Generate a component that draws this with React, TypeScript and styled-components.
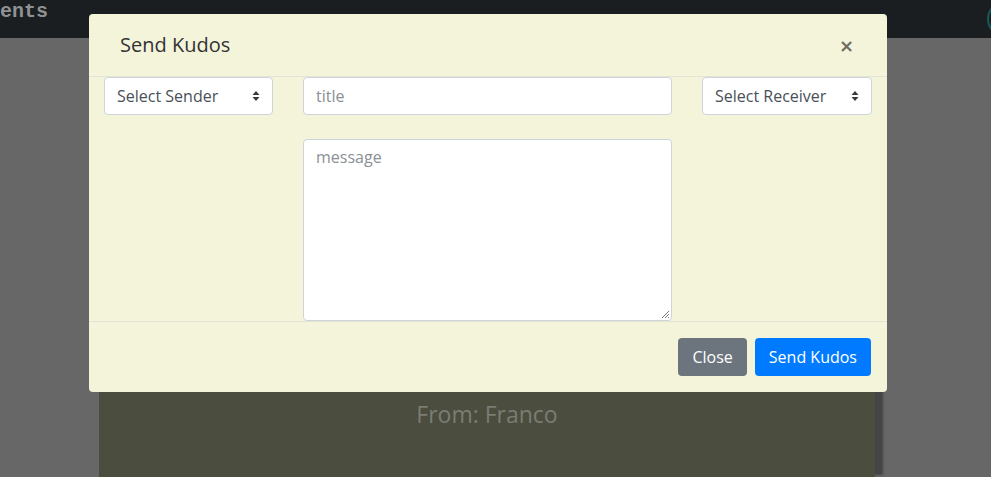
import React from "react";
import styled, { createGlobalStyle } from "styled-components";

const Global = createGlobalStyle`
  html, body { margin: 0; padding: 0; }
  body {
    background: #676767;
    font-family: "Open Sans", "Lato", sans-serif;
    overflow: hidden;
    height: 477px;
  }
  * { box-sizing: border-box; }
`;

const Page = styled.div`
  position: relative;
  width: 991px;
  height: 477px;
  overflow: hidden;
`;

const NavBar = styled.div`
  height: 38px;
  background: #1b1e21;
  display: flex;
  align-items: flex-start;
  justify-content: space-between;
  overflow: hidden;
`;

const Brand = styled.span`
  font-family: "Liberation Mono", monospace;
  font-weight: bold;
  font-size: 20px;
  color: #8f9293;
  line-height: 24px;
  margin-left: 0;
`;

const Avatar = styled.span`
  width: 36px;
  height: 36px;
  border-radius: 50%;
  border: 2px solid #15595f;
  margin-top: 1px;
  margin-right: -32px;
`;

const Main = styled.div`
  display: flex;
  padding-left: 99px;
  height: 439px;
`;

const Card = styled.div`
  width: 776px;
  height: 100%;
  background: #4b4d3f;
  box-shadow: 10px 0 2px -2px #454545;
  display: flex;
  flex-direction: column;
  align-items: center;
  padding-top: 361px;
`;

const From = styled.div`
  font-size: 23px;
  color: #7b7c72;
  line-height: 30px;
`;

const Overlay = styled.div`
  position: absolute;
  inset: 0;
  display: flex;
  justify-content: flex-start;
  align-items: flex-start;
  padding: 14px 0 0 89px;
`;

const Modal = styled.div`
  width: 798px;
  background: #f4f4da;
  border-radius: 4px;
`;

const Header = styled.div`
  height: 63px;
  display: flex;
  align-items: flex-start;
  justify-content: space-between;
  padding: 17px 33px 0 31px;
  border-bottom: 1px solid #e3e4d4;
`;

const Title = styled.h5`
  margin: 0;
  font-size: 20px;
  font-weight: 400;
  color: #333;
  line-height: 28px;
`;

const CloseX = styled.button`
  border: none;
  background: none;
  padding: 0;
  margin-top: 5px;
  font-size: 18px;
  font-weight: 700;
  line-height: 20px;
  color: #6d6d64;
  font-family: "DejaVu Sans", sans-serif;
`;

const Body = styled.div`
  display: flex;
  justify-content: space-between;
  align-items: flex-start;
  padding: 0 15px;
`;

const SelectBox = styled.div<{ $w: number }>`
  width: ${(p) => p.$w}px;
  height: 38px;
  background: #fff;
  border: 1px solid #ced4da;
  border-radius: 4px;
  display: flex;
  align-items: center;
  justify-content: space-between;
  padding: 0 12px 0 12px;
  font-size: 16px;
  color: #495057;
`;

const Arrows = styled.svg`
  width: 8px;
  height: 12px;
`;

const Center = styled.div`
  width: 369px;
  display: flex;
  flex-direction: column;
  gap: 24px;
`;

const Input = styled.div`
  height: 38px;
  background: #fff;
  border: 1px solid #ced4da;
  border-radius: 4px;
  padding: 0 12px;
  display: flex;
  align-items: center;
  font-size: 16px;
  color: #8a9095;
`;

const TextArea = styled.div`
  position: relative;
  height: 182px;
  background: #fff;
  border: 1px solid #ced4da;
  border-radius: 4px;
  padding: 5px 12px;
  font-size: 16px;
  color: #8a9095;
  line-height: 24px;
`;

const Grip = styled.svg`
  position: absolute;
  right: 1px;
  bottom: 1px;
  width: 9px;
  height: 9px;
`;

const Footer = styled.div`
  border-top: 1px solid #e3e4d4;
  display: flex;
  justify-content: flex-end;
  gap: 8px;
  padding: 16px 16px 16px;
`;

const Btn = styled.button<{ $primary?: boolean }>`
  height: 38px;
  border: none;
  border-radius: 4px;
  padding: 0 14px;
  font-family: "Open Sans", "Lato", sans-serif;
  font-size: 16px;
  color: #fff;
  background: ${(p) => (p.$primary ? "#007bff" : "#6c757d")};
`;

const SelectArrows = () => (
  <Arrows viewBox="0 0 8 12">
    <path d="M4 1 L7.5 5 L0.5 5 Z M4 11 L7.5 7 L0.5 7 Z" fill="#343a40" />
  </Arrows>
);

export default function App() {
  return (
    <Page>
      <Global />
      <NavBar>
        <Brand>ents</Brand>
        <Avatar />
      </NavBar>
      <Main>
        <Card>
          <From>From: Franco</From>
        </Card>
      </Main>
      <Overlay>
        <Modal>
          <Header>
            <Title>Send Kudos</Title>
            <CloseX>×</CloseX>
          </Header>
          <Body>
            <SelectBox $w={169}>
              Select Sender
              <SelectArrows />
            </SelectBox>
            <Center>
              <Input>title</Input>
              <TextArea>
                message
                <Grip viewBox="0 0 9 9">
                  <path d="M8 1 L1 8 M8 4 L4 8 M8 7 L7 8" stroke="#777" strokeWidth="1" />
                </Grip>
              </TextArea>
            </Center>
            <SelectBox $w={170}>
              Select Receiver
              <SelectArrows />
            </SelectBox>
          </Body>
          <Footer>
            <Btn>Close</Btn>
            <Btn $primary>Send Kudos</Btn>
          </Footer>
        </Modal>
      </Overlay>
    </Page>
  );
}
